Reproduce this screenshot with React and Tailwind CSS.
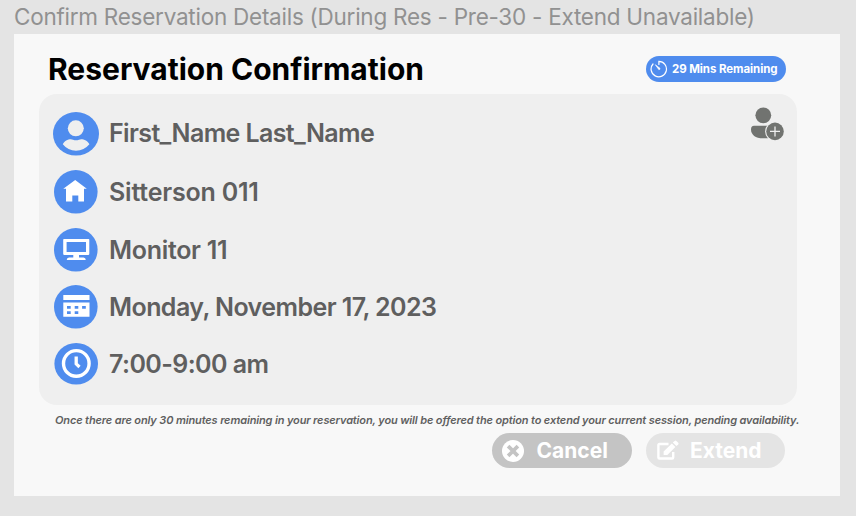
import React from "react";

const BLUE = "#4f8cee";

function UserIcon() {
  return (
    <svg className="-ml-px h-11 w-[46px]" viewBox="0 0 46 44">
      <ellipse cx="23" cy="21.8" rx="23" ry="21.8" fill={BLUE} />
      <circle cx="22.8" cy="16.3" r="8" fill="#efefef" />
      <path d="M9.8 32.3C11 29.2 15 27.3 17.8 27.3Q19 27.3 20 27.8Q23 28.8 26 27.8Q27 27.3 28.2 27.3C31 27.3 35.2 29.2 36.4 32.3Q31 38.7 23 38.7Q15 38.7 9.8 32.3Z" fill="#efefef" />
    </svg>
  );
}

function Disc({ children }) {
  return (
    <svg className="size-11" viewBox="0 0 44 44">
      <circle cx="21.8" cy="21.8" r="21.8" fill={BLUE} />
      {children}
    </svg>
  );
}

function HouseIcon() {
  return (
    <Disc>
      <path d="M21.2 10L32.8 18.8H30V31.4H24.3V25.4H18.3V31.4H12V18.8H9.3Z" fill="#fff" />
    </Disc>
  );
}

function MonitorIcon() {
  return (
    <Disc>
      <path fillRule="evenodd" d="M10 11H34.5Q35.3 11 35.3 11.8V26.1Q35.3 26.9 34.5 26.9H25V29.5H29.5Q31.7 29.9 31.8 32H12.7Q12.8 29.9 15 29.5H19.3V26.9H10Q9.2 26.9 9.2 26.1V11.8Q9.2 11 10 11ZM12.6 14V23.9H32V14Z" fill="#fff" />
    </Disc>
  );
}

function CalendarIcon() {
  return (
    <Disc>
      <path d="M9.3 10H35.5V15H9.3Z" fill="#fff" />
      <path fillRule="evenodd" d="M9.3 17.6H35.5V31.8H9.3ZM13 21V23.7H16.7V21ZM20.7 21V23.7H24.3V21ZM28.1 21V23.7H31.8V21ZM13 26.3V29H16.7V26.3ZM20.7 26.3V29H24.3V26.3Z" fill="#fff" />
    </Disc>
  );
}

function ClockIcon() {
  return (
    <svg className="h-[42px] w-11" viewBox="0 0 44 42">
      <ellipse cx="22.2" cy="20.8" rx="21.8" ry="20.8" fill={BLUE} />
      <circle cx="22.3" cy="20.4" r="12.8" fill="none" stroke="#fff" strokeWidth="3.4" />
      <path d="M22.2 13.5V20.9L25.5 24" fill="none" stroke="#fff" strokeWidth="3.3" />
    </svg>
  );
}

function TimerIcon() {
  return (
    <svg className="size-[18px]" viewBox="0 0 18 18">
      <path d="M8.9 4.4V1.4A7.7 7.7 0 1 1 3 4" fill="none" stroke="#fff" strokeWidth="1.2" strokeLinecap="round" />
      <path d="M5.3 4.7L10 8.3Q10.3 9.6 8.9 9.7Z" fill="#fff" stroke="#fff" strokeWidth=".6" strokeLinejoin="round" />
    </svg>
  );
}

function AddUserIcon() {
  return (
    <svg className="h-[34px] w-[34px]" viewBox="0 0 34 34">
      <circle cx="13.3" cy="8.3" r="7.9" fill="#717370" />
      <path d="M3.8 18.8H22V31.3H13C5.5 31.3 1 27.8 1 22.5Q1 18.8 4 18.8Z" fill="#717370" />
      <circle cx="25" cy="24.4" r="9.9" fill="#efefef" />
      <circle cx="25" cy="24.4" r="8.8" fill="#717370" />
      <path d="M25 19.4V29.4M20 24.4H30" stroke="#efefef" strokeWidth="1.3" />
    </svg>
  );
}

function CancelIcon() {
  return (
    <svg className="size-[22px]" viewBox="0 0 22 22">
      <circle cx="11" cy="11" r="11" fill="#fff" />
      <path d="M7.4 7.4L14.6 14.6M14.6 7.4L7.4 14.6" stroke="#c4c4c4" strokeWidth="3.7" strokeLinecap="square" />
    </svg>
  );
}

function EditIcon() {
  return (
    <svg className="size-[22px]" viewBox="0 0 22 22">
      <path d="M11.5 4H2.4Q1.4 4 1.4 5V17.5Q1.4 18.5 2.4 18.5H15.2Q16.2 18.5 16.2 17.5V12" fill="none" stroke="#fff" strokeWidth="2.4" />
      <path d="M14.9 3.5L18.4 7L10.3 15H6.6V11.5Z" fill="#fff" />
      <path d="M15.8 2.6L17.6 .9Q18.5 .1 19.4 .9L21.2 2.7Q22 3.6 21.2 4.4L19.4 6.1Z" fill="#fff" />
    </svg>
  );
}

const details = [
  { icon: UserIcon, text: "First_Name Last_Name", row: "h-[58px]", label: "tracking-[-0.62px]" },
  { icon: HouseIcon, text: "Sitterson 011", row: "h-[58px]", label: "pt-0.5 tracking-[-0.2px]" },
  { icon: MonitorIcon, text: "Monitor 11", row: "h-[58px]", label: "pt-0.5 tracking-[-0.3px]" },
  { icon: CalendarIcon, text: "Monday, November 17, 2023", row: "h-[57px]", label: "pt-0.5 tracking-[-0.57px]" },
  { icon: ClockIcon, text: "7:00-9:00 am", row: "h-[56px]", label: "pt-0.5 tracking-[-0.57px]" },
];

export default function App() {
  return (
    <div className="h-[516px] w-[856px] overflow-hidden bg-[#e4e4e4] pl-3.5 font-['Inter',sans-serif]">
      <div className="flex h-[33.5px] items-center whitespace-nowrap text-[22.5px] leading-8 tracking-[-0.25px] text-[#919191]">
        Confirm Reservation Details (During Res - Pre-30 - Extend Unavailable)
      </div>
      <main className="h-[462.5px] w-[825.5px] bg-[#f8f8f8] pl-[25px]">
        <header className="flex h-[60px] items-start justify-between pr-[53.5px] pl-[9px]">
          <h1 className="mt-[17.5px] whitespace-nowrap text-[30px] leading-9 font-bold text-black">
            Reservation Confirmation
          </h1>
          <div className="mt-[22.5px] flex h-[25.5px] w-[140px] items-center gap-1 rounded-full bg-[#4f8cee] pl-1 text-[11.5px] font-bold tracking-[-0.08px] whitespace-nowrap text-white">
            <TimerIcon />
            <span className="pt-px">29 Mins Remaining</span>
          </div>
        </header>
        <section className="flex h-[311.5px] w-[758px] justify-between rounded-[18px] bg-[#efefef] pr-[13px] pl-[15px]">
          <ul className="pt-[11px]">
            {details.map(({ icon: Icon, text, row, label }) => (
              <li key={text} className={`flex items-center text-[25px] font-semibold whitespace-nowrap text-[#5f5f5f] ${row}`}>
                <div className="w-[55px]">
                  <Icon />
                </div>
                <span className={label}>{text}</span>
              </li>
            ))}
          </ul>
          <button className="mt-[13px] h-[34px]" aria-label="Add guest">
            <AddUserIcon />
          </button>
        </section>
        <p className="ml-4 h-[28px] pt-[7px] text-[11px] leading-4 font-semibold tracking-[-0.138px] whitespace-nowrap text-[#5f5f5f] italic">
          Once there are only 30 minutes remaining in your reservation, you will be offered the option to extend your current session, pending availability.
        </p>
        <div className="ml-[453px] flex gap-3.5 text-[21px] font-bold text-white">
          <button className="flex h-[35px] w-[140px] items-center rounded-full bg-[#c4c4c4] pl-[10px]">
            <CancelIcon />
            <span className="ml-[12.5px] pt-px">Cancel</span>
          </button>
          <button className="flex h-[35px] w-[139px] items-center rounded-full bg-[#e4e4e4] pl-[10.5px]" disabled>
            <EditIcon />
            <span className="ml-[11.5px] pt-px">Extend</span>
          </button>
        </div>
      </main>
    </div>
  );
}
